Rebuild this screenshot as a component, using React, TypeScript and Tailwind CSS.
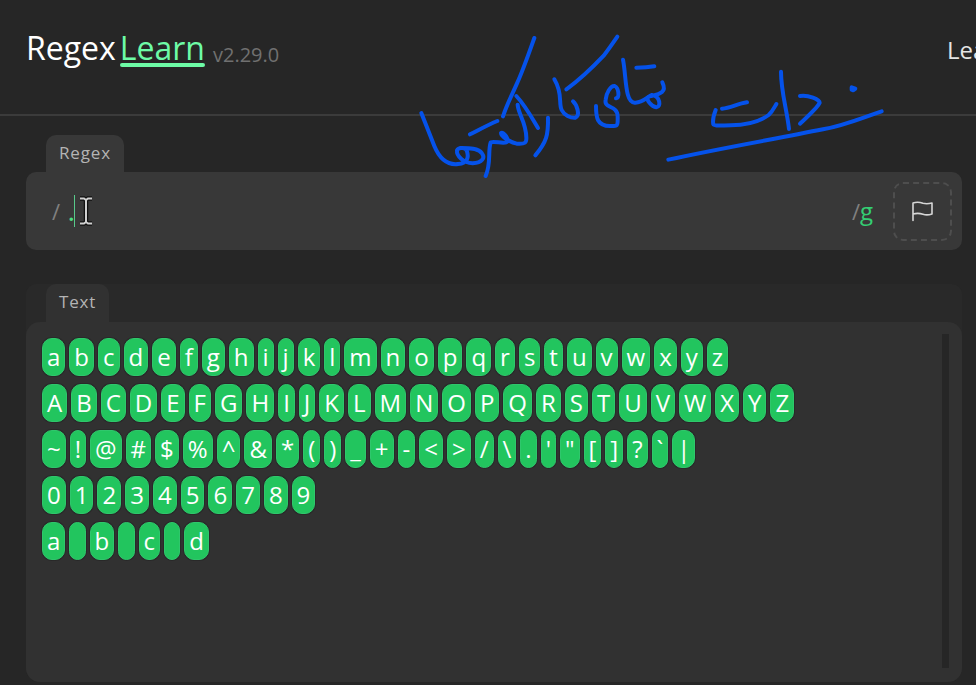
import { useState } from "react";

const ROWS = [
  "abcdefghijklmnopqrstuvwxyz",
  "ABCDEFGHIJKLMNOPQRSTUVWXYZ",
  "~!@#$%^&*()_+-<>/\\.'\"[]?`|",
  "0123456789",
  "a b c d",
];

function Header() {
  return (
    <header className="flex h-[116px] items-start justify-between overflow-hidden border-b-2 border-[#3b3b3b] pl-[26px]">
      <a href="#home" className="flex items-end gap-2 pt-[24px]">
        <span className="flex gap-1 text-[32px] leading-[48px] text-white">
          <span>Regex</span>
          <span className="relative text-[#6dfba6]">
            Learn
            <span className="absolute inset-x-0 bottom-[5px] h-[4px] rounded-full bg-[#6dfba6]" />
          </span>
        </span>
        <span className="text-[20px] leading-[34px] text-[#707070]">v2.29.0</span>
      </a>
      <nav className="w-[29px] shrink-0 pt-[32px] whitespace-nowrap">
        <a href="#learn" className="text-[24px] leading-[36px] text-[#e4e4e4]">
          Lea
        </a>
      </nav>
    </header>
  );
}

function FlagIcon() {
  return (
    <svg width="24" height="24" viewBox="0 0 24 24" fill="none" stroke="#d6d6d6" strokeWidth="1.6" strokeLinejoin="round" strokeLinecap="round" aria-hidden="true">
      <path d="M2 21.500V4M2 4c4-1.300 7-.8 10 .3 3 .8 6 .5 9-.3v11c-3 1-6 1.300-9 .3-3-1-6-1.300-10-.3" />
    </svg>
  );
}

function TextCursor() {
  return (
    <svg className="absolute top-[11px] left-[10px]" width="16" height="32" viewBox="0 0 16 32" fill="none" aria-hidden="true">
      <path d="M2 3.500h4l2 1.500 2-1.500h4M2 28.500h4l2-1.500 2 1.500h4M8 5v22" stroke="#111" strokeWidth="4.500" />
      <path d="M2 3.500h4l2 1.500 2-1.500h4M2 28.500h4l2-1.500 2 1.500h4M8 5v22" stroke="#d0d0d0" strokeWidth="2" />
    </svg>
  );
}

function RegexField() {
  const [value, setValue] = useState(".");
  return (
    <section className="flex flex-col items-start">
      <label htmlFor="regex" className="ml-5 rounded-t-[10px] bg-[#383838] px-[13px] pt-[5px] pb-[6px] text-[17px] leading-[26px] tracking-wider text-[#b4b4b4]">
        Regex
      </label>
      <div className="flex h-[78px] w-full items-center rounded-[10px] bg-[#383838] pr-[10px] pl-[26px]">
        <span className="text-[22px] text-[#808080]">/</span>
        <div className="relative ml-2 h-[54px] flex-1">
          <input
            id="regex"
            value={value}
            onChange={(e) => setValue(e.target.value)}
            spellCheck={false}
            className="h-full w-full bg-transparent text-[24px] font-semibold text-[#4ade80] outline-none"
          />
          <span className="absolute top-[11px] left-[6px] h-[32px] w-px bg-[#58c98a]" />
          <TextCursor />
        </div>
        <span className="flex items-baseline text-[24px]">
          <span className="text-[22px] text-[#808080]">/</span>
          <span className="font-medium text-[#34cf73]">g</span>
        </span>
        <button type="button" aria-label="Flags" className="ml-5 flex size-[59px] items-center justify-center rounded-[10px] border-2 border-dashed border-[#4e4e4e]">
          <FlagIcon />
        </button>
      </div>
    </section>
  );
}

function TextField() {
  return (
    <section className="mt-[34px] flex flex-col items-start rounded-t-[10px] rounded-b-[14px] bg-[#292929]">
      <h2 className="ml-5 rounded-t-[10px] bg-[#313131] px-[13px] pt-[5px] pb-[7px] text-[17px] leading-[26px] tracking-wider text-[#b4b4b4]">
        Text
      </h2>
      <div className="flex min-h-[360px] w-full justify-between rounded-[14px] bg-[#313131] pt-3 pr-[13px] pb-[14px] pl-4">
        <div className="flex flex-col gap-2 pt-1">
          {ROWS.map((row) => (
            <div key={row} className="flex h-[38px] gap-1">
              {row.split("").map((ch, i) => (
                <span key={i} className="rounded-[10px] border border-[#2fc76c] bg-[#22c55e] px-1 text-[24px] leading-[35px] whitespace-pre text-white ring-1 ring-[#292929]">
                  {ch}
                </span>
              ))}
            </div>
          ))}
        </div>
        <div className="w-[7px] bg-[#262626]" />
      </div>
    </section>
  );
}

function Handwriting() {
  return (
    <svg
      className="pointer-events-none absolute top-[20px] left-[400px]"
      width="500"
      height="170"
      viewBox="0 0 1500 510"
      fill="none"
      stroke="#0552ea"
      strokeWidth="12"
      strokeLinecap="round"
      strokeLinejoin="round"
      aria-hidden="true"
    >
      <path d="M64 279L103 378C122 424 149 435 174 432C204 429 207 411 200 391C193 381 175 382 171 391C169 408 190 429 218 430C247 428 256 414 246 400C235 383 204 384 180 384" />
      <path d="M210 343C238 329 265 314 292 303M309 289C321 251 336 225 352 188C369 151 386 102 403 54" />
      <path d="M257 468C274 429 263 394 272 367C284 363 306 371 319 367C331 361 310 333 303 339C303 350 331 367 350 371C376 373 380 368 379 352C378 306 354 281 353 254" />
      <path d="M349 228C376 257 395 292 414 324M444 293C445 344 440 366 406 406" />
      <path d="M463 178C489 221 475 249 485 270C493 286 511 294 526 293C543 285 529 253 519 244" />
      <path d="M499 208C538 180 577 143 611 107C626 88 639 69 652 50" />
      <path d="M588 258C588 292 591 318 630 318C656 319 653 316 653 290C653 253 611 268 617 239C618 220 632 196 644 198C656 203 660 233 648 235" />
      <path d="M669 119C679 167 674 252 706 248C729 248 744 229 756 225C781 229 784 261 769 262C755 260 736 237 744 231C771 223 804 222 787 187M709 143C729 143 746 142 763 139" />
      <path d="M805 419C955 386 1119 358 1269 328C1335 316 1387 293 1445 274" />
      <path d="M947 270C940 288 938 304 940 313C942 318 962 316 993 316C1046 315 1080 304 1106 285C1117 275 1122 264 1129 252M966 266C992 264 1012 251 1041 247" />
      <path d="M1143 155C1143 214 1160 267 1167 327M1200 228C1225 224 1259 239 1259 248C1254 261 1216 296 1200 311" />
      <path d="M1355 202L1366 206L1360 211L1355 209Z" />
    </svg>
  );
}

export default function App() {
  return (
    <div className="relative min-h-screen overflow-x-hidden bg-[#262626] font-['Open_Sans',sans-serif]">
      <Header />
      <main className="pt-[19px] pr-[14px] pb-[3px] pl-[26px]">
        <RegexField />
        <TextField />
      </main>
      <Handwriting />
    </div>
  );
}
